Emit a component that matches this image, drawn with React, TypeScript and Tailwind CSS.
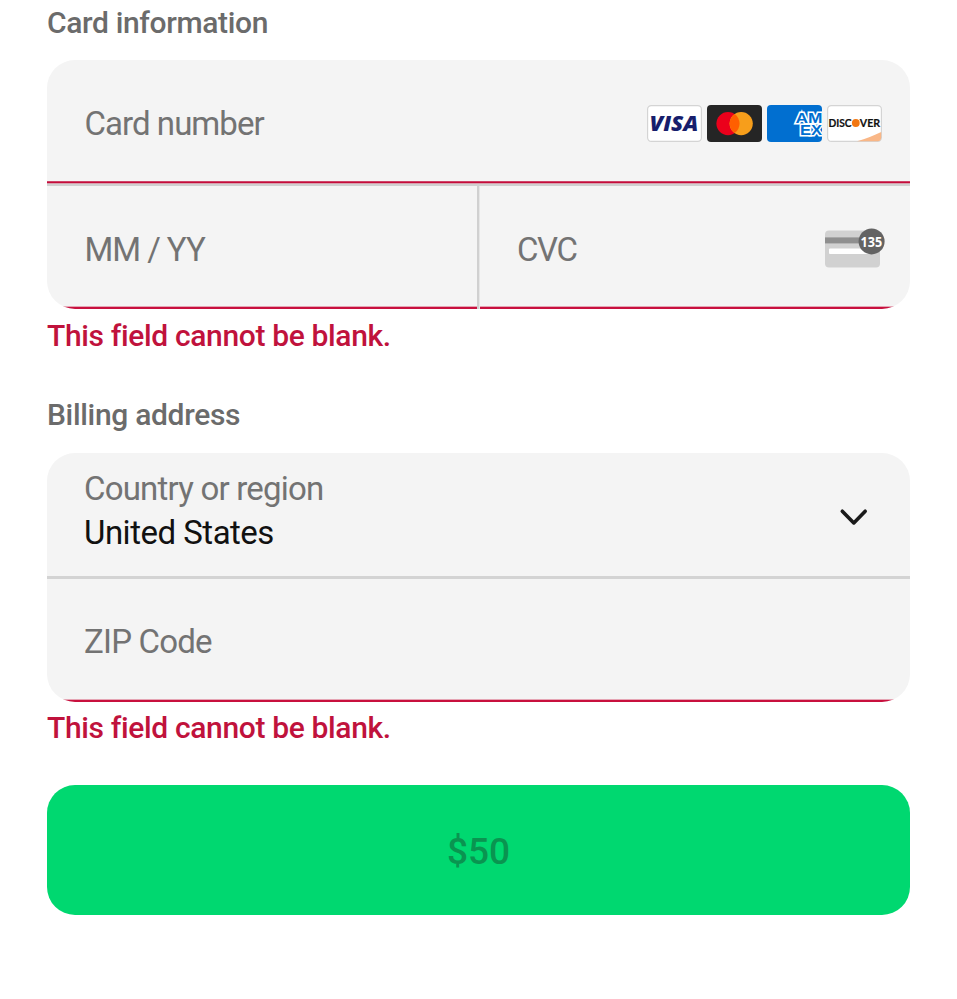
const brandIcon = "block h-[37px] w-[55px] shrink-0 tracking-normal";

function Visa() {
  return (
    <svg className={brandIcon} viewBox="0 0 55 37">
      <rect x="0.6" y="0.6" width="53.8" height="35.8" rx="3.6" fill="#fff" stroke="#d4d4d4" strokeWidth="1.2" />
      <text x="2.4" y="26" textLength="49" lengthAdjust="spacingAndGlyphs" fontFamily="Open Sans" fontWeight="800" fontStyle="italic" fontSize="20.5" fill="#171e6c">VISA</text>
    </svg>
  );
}

function Mastercard() {
  return (
    <svg className={brandIcon} viewBox="0 0 55 37">
      <rect width="55" height="37" rx="4" fill="#252525" />
      <circle cx="21" cy="18.6" r="11.6" fill="#eb001b" />
      <circle cx="34.2" cy="18.6" r="11.6" fill="#f79e1b" />
      <path d="M27.6 9.1a11.6 11.6 0 0 1 0 19a11.6 11.6 0 0 1 0-19Z" fill="#ff5f00" />
    </svg>
  );
}

function Amex() {
  return (
    <svg className={brandIcon} viewBox="0 0 55 37">
      <defs>
        <clipPath id="amex-clip"><rect width="55" height="37" rx="4" /></clipPath>
      </defs>
      <g clipPath="url(#amex-clip)">
        <rect width="55" height="37" fill="#016fd0" />
        <g fontFamily="Liberation Sans" fontWeight="700" fontSize="15.5" fill="#016fd0" stroke="#fff" strokeWidth="3" paintOrder="stroke">
          <text x="28.5" y="17.8" textLength="27" lengthAdjust="spacingAndGlyphs">AM</text>
          <text x="33" y="30.4" textLength="22" lengthAdjust="spacingAndGlyphs">EX</text>
        </g>
      </g>
    </svg>
  );
}

function Discover() {
  return (
    <svg className={brandIcon} viewBox="0 0 55 37">
      <rect x="0.6" y="0.6" width="53.8" height="35.8" rx="3.6" fill="#fff" stroke="#d4d4d4" strokeWidth="1.2" />
      <path d="M30 36.2C39 33.7 47 30.5 54.2 27V32.6a3.6 3.6 0 0 1-3.6 3.6Z" fill="#f9b787" />
      <g fontFamily="Lato" fontWeight="700" fontSize="11.5" fill="#111" stroke="#111" strokeWidth="0.2">
        <text x="1.4" y="22.2" textLength="23.2" lengthAdjust="spacingAndGlyphs">DISC</text>
        <text x="32.8" y="22.2" textLength="20.4" lengthAdjust="spacingAndGlyphs">VER</text>
      </g>
      <circle cx="28.8" cy="18" r="3.9" fill="#f27712" />
    </svg>
  );
}

function CvcCard() {
  return (
    <svg className="block h-[41px] w-[60px] shrink-0 tracking-normal" viewBox="0 0 60 41">
      <rect x="0" y="3.4" width="55" height="37" rx="4" fill="#d1d1d1" />
      <rect x="0" y="10.4" width="55" height="6" fill="#8f8f8f" />
      <rect x="4" y="21.4" width="42" height="5.7" rx="1" fill="#fff" />
      <circle cx="46.6" cy="14.4" r="13" fill="#636363" />
      <text x="35.6" y="19.6" textLength="21.6" lengthAdjust="spacingAndGlyphs" fontFamily="Open Sans" fontWeight="700" fontSize="14.5" fill="#fff">135</text>
    </svg>
  );
}

function ErrorLine() {
  return (
    <div className="flex shrink-0 flex-col">
      <div className="h-px bg-[#e5a5b4]" />
      <div className="h-0.5 bg-[#c8103e]" />
    </div>
  );
}

function ErrorText() {
  return <p className="text-[30px] leading-9 font-medium tracking-[-0.35px] text-[#c0123c] [font-variant-ligatures:common-ligatures]">This field cannot be blank.</p>;
}

export default function App() {
  return (
    <main className="flex h-[999px] w-[957px] flex-col overflow-hidden bg-white pr-[47px] pl-[47px] font-[Roboto,sans-serif] text-[33px] tracking-[-0.95px] text-[#737373]">
      <h2 className="h-[60px] pt-[5px] text-[30px] leading-9 font-medium tracking-[-0.35px] text-[#6b6b6b]">Card information</h2>
      <section className="flex h-[249px] shrink-0 flex-col overflow-hidden rounded-[28px] bg-[#f4f4f4]">
        <div className="flex h-[121px] items-center justify-between pt-[6px] pr-[27.6px] pl-[37px]">
          <span className="pl-[0.5px]">Card number</span>
          <div className="flex gap-[5.1px]">
            <Visa />
            <Mastercard />
            <Amex />
            <Discover />
          </div>
        </div>
        <div className="h-px shrink-0 bg-[#cf4468]" />
        <div className="h-px shrink-0 bg-[#c40c3a]" />
        <div className="h-px shrink-0 bg-[#d7a0ae]" />
        <div className="h-0.5 shrink-0 bg-[#d0d0d0]" />
        <div className="flex h-[123px]">
          <div className="flex w-[430px] flex-col">
            <div className="flex h-[120px] items-center pt-[7px] pl-[37.5px] tracking-[-1.05px]">MM / YY</div>
            <ErrorLine />
          </div>
          <div className="flex w-[3px]">
            <div className="w-0.5 bg-[#d0d0d0]" />
            <div className="w-px bg-[#e6e6e6]" />
          </div>
          <div className="flex w-[430px] flex-col">
            <div className="flex h-[120px] items-center justify-between pt-[7px] pr-[25px] pl-[37px]">
              <span className="tracking-[-1.4px]">CVC</span>
              <div className="pb-[4px]"><CvcCard /></div>
            </div>
            <ErrorLine />
          </div>
        </div>
      </section>
      <div className="h-[88px] pt-[9px]"><ErrorText /></div>
      <h2 className="h-[56px] text-[30px] leading-9 font-medium tracking-[-0.32px] text-[#6b6b6b]">Billing address</h2>
      <section className="flex h-[249px] shrink-0 flex-col overflow-hidden rounded-[28px] bg-[#f4f4f4]">
        <div className="flex h-[123px] items-center justify-between pr-[42px] pl-[37px]">
          <div className="flex flex-col pb-[8px] leading-11">
            <span className="tracking-[-0.8px]">Country or region</span>
            <span className="tracking-[-0.5px] text-[#111]">United States</span>
          </div>
          <svg className="mt-[5px] h-[18px] w-[29px]" viewBox="0 0 29 18" fill="none" stroke="#1a1a1a" strokeWidth="3.6" strokeLinecap="round" strokeLinejoin="round">
            <path d="M3.3 3.2L14.8 14.9L26.2 3.2" />
          </svg>
        </div>
        <div className="h-[3px] shrink-0 bg-[#d3d3d3]" />
        <div className="flex h-[120px] items-center pt-[6px] pl-[37px] tracking-[-0.8px]">ZIP Code</div>
        <ErrorLine />
      </section>
      <div className="h-[83px] pt-[8px]"><ErrorText /></div>
      <button className="flex h-[130px] shrink-0 items-center justify-center rounded-[28px] bg-[#00d870] pt-[4px] text-[37px] font-medium tracking-normal text-[#0a9450]">$50</button>
    </main>
  );
}
